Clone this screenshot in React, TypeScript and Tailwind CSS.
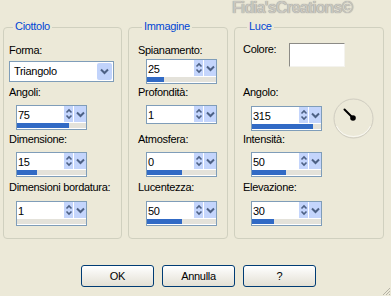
import React from "react";

function Label({ children, className = "" }: { children: React.ReactNode; className?: string }) {
  return <div className={`h-[13px] leading-[13px] tracking-[-0.3px] text-black whitespace-nowrap ${className}`}>{children}</div>;
}

function Chevron() {
  return (
    <svg width="9" height="7" viewBox="0 0 9 7">
      <polyline points="1,1.5 4.5,5 8,1.5" fill="none" stroke="#4d6185" strokeWidth="2" />
    </svg>
  );
}

// edit + spin arrows + dropdown, optional slider strip under it
function SpinBox({ value, fill, className = "" }: { value: string; fill: number | null; className?: string }) {
  return (
    <div className={`w-[71px] border border-[#7f9db9] bg-white ${className}`}>
      <div className="flex h-[16px]">
        <div className="flex-1 pl-[1px] pt-[1px] leading-[16px] tracking-[-0.3px]">{value}</div>
        <div className="w-[10px] flex items-center justify-center bg-[#c4d5fc] border-l border-white">
          <svg width="8" height="14" viewBox="0 0 8 14">
            <polyline points="1.5,5.5 4,3 6.5,5.5" fill="none" stroke="#4d6185" strokeWidth="1.6" />
            <polyline points="1.5,8.5 4,11 6.5,8.5" fill="none" stroke="#4d6185" strokeWidth="1.6" />
          </svg>
        </div>
        <div className="w-[13px] flex items-center justify-center bg-[#c4d5fc] border-l border-white">
          <Chevron />
        </div>
      </div>
      {fill !== null ? (
        <div className="mt-[1px] mb-[1px] h-[5px] bg-[#e4e2da]">
          <div className="h-full bg-[#316ac5]" style={{ width: fill }} />
        </div>
      ) : (
        <div className="h-[1px]" />
      )}
    </div>
  );
}

function Group({ title, className = "", children }: { title: string; className?: string; children: React.ReactNode }) {
  return (
    <div className={`h-[212px] rounded-[4px] border border-[#d0d0bf] ${className}`}>
      <div className="-mt-[8px] ml-[4px] w-fit px-[2px] bg-[#ece9d8] h-[13px] leading-[13px] tracking-[-0.3px] text-[#0046d5]">
        {title}
      </div>
      {children}
    </div>
  );
}

export default function App() {
  return (
    <div className="relative w-[391px] h-[296px] overflow-hidden bg-[#ece9d8] text-[11px] text-black font-['Liberation_Sans',Arial,sans-serif]">
      {/* watermark */}
      <div className="h-[27px] pl-[232px]">
        <div className="text-[16px] leading-[16px] font-bold tracking-[-0.9px] text-[#c9c7c0] [text-shadow:0_0_1px_#7d7d7d]">
          Fidia'sCreations©
        </div>
      </div>

      <div className="flex items-start gap-[6px] pl-[3px]">
        {/* Ciottolo */}
        <Group title="Ciottolo" className="w-[119px] pl-[5px]">
          <Label className="mt-[11px]">Forma:</Label>
          <div className="mt-[4px] w-[105px] h-[21px] border border-[#7f9db9] bg-white flex items-center p-[1px]">
            <div className="flex-1 pl-[3px] tracking-[-0.3px] leading-[17px]">Triangolo</div>
            <div className="w-[15px] h-[17px] flex items-center justify-center bg-[#c1d3fb] rounded-[2px]">
              <Chevron />
            </div>
          </div>
          <Label className="mt-[4px]">Angoli:</Label>
          <SpinBox value="75" fill={52} className="mt-[6px] ml-[7px]" />
          <Label className="mt-[3px]">Dimensione:</Label>
          <SpinBox value="15" fill={20} className="mt-[6px] ml-[7px]" />
          <Label className="mt-[4px]">Dimensioni bordatura:</Label>
          <SpinBox value="1" fill={0} className="mt-[7px] ml-[7px]" />
        </Group>

        {/* Immagine */}
        <Group title="Immagine" className="w-[100px] pl-[9px]">
          <Label className="mt-[11px]">Spianamento:</Label>
          <SpinBox value="25" fill={17} className="mt-[2px] ml-[8px]" />
          <Label className="mt-[2px]">Profondità:</Label>
          <SpinBox value="1" fill={null} className="mt-[6px] ml-[8px]" />
          <Label className="mt-[9px]">Atmosfera:</Label>
          <SpinBox value="0" fill={35} className="mt-[6px] ml-[8px]" />
          <Label className="mt-[4px]">Lucentezza:</Label>
          <SpinBox value="50" fill={35} className="mt-[7px] ml-[8px]" />
        </Group>

        {/* Luce */}
        <Group title="Luce" className="w-[150px] pl-[8px]">
          <div className="mt-[10px] flex items-start">
            <Label className="w-[46px]">Colore:</Label>
            <div className="w-[56px] h-[24px] bg-white border border-t-[#8c8b86] border-l-[#8c8b86] border-r-[#f4f3ee] border-b-[#f4f3ee]" />
          </div>
          <div className="mt-[19px] flex items-start">
            <div className="w-[79px]">
              <Label>Angolo:</Label>
              <SpinBox value="315" fill={61} className="mt-[7px] ml-[8px]" />
            </div>
            <svg width="41" height="42" viewBox="0 0 41 42" className="mt-[12px] -mb-[9px] ml-[11px]">
              <circle cx="20.5" cy="20.5" r="19.5" fill="none" stroke="#cfccc0" strokeWidth="1" />
              <path d="M3.5 28 A19 19 0 0 0 37.5 28" fill="none" stroke="#ffffff" strokeWidth="1" opacity="0.7" />
              <line x1="11.5" y1="11.5" x2="20" y2="20" stroke="#000" strokeWidth="2" strokeLinecap="round" />
              <circle cx="20" cy="20" r="2.8" fill="#000" />
            </svg>
          </div>
          <Label className="mt-[2px]">Intensità:</Label>
          <SpinBox value="50" fill={34} className="mt-[6px] ml-[8px]" />
          <Label className="mt-[4px]">Elevazione:</Label>
          <SpinBox value="30" fill={22} className="mt-[7px] ml-[8px]" />
        </Group>
      </div>

      <div className="mt-[26px] pl-[81px] flex gap-[8px]">
        {["OK", "Annulla", "?"].map((t) => (
          <button
            key={t}
            className="w-[73px] h-[22px] rounded-[3px] border border-[#003c74] bg-linear-to-b from-white to-[#e3e0d4] leading-[20px] tracking-[-0.3px] text-black"
          >
            {t}
          </button>
        ))}
      </div>

      {/* size grip */}
      <svg width="10" height="10" viewBox="0 0 10 10" className="absolute right-0 bottom-0">
        <line x1="9" y1="2" x2="2" y2="9" stroke="#b5b2a5" />
        <line x1="9" y1="5" x2="5" y2="9" stroke="#b5b2a5" />
        <line x1="9" y1="8" x2="8" y2="9" stroke="#b5b2a5" />
      </svg>
    </div>
  );
}
